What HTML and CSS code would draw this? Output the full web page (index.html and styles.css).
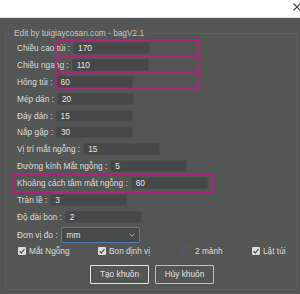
FILE: index.html
```html
<!DOCTYPE html>
<html lang="vi">
<head>
    <meta charset="UTF-8">
    <title>bagV2.1</title>
    <link rel="stylesheet" href="styles.css">
</head>
<body>
    <div class="titlebar">
        <svg class="close" viewBox="0 0 8 8"><path d="M0.5 0.5 L7.5 7.5 M7.5 0.5 L0.5 7.5"/></svg>
    </div>

    <div class="panel">
        <fieldset class="group">
            <legend>Edit by tuigiaycosan.com - bagV2.1</legend>

            <div class="row"><label>Chiều cao túi :</label><input class="field" value="170"></div>
            <div class="row"><label>Chiều ngang :</label><input class="field" value="110"></div>
            <div class="row"><label>Hông túi :</label><input class="field" value="60"></div>
            <div class="row"><label>Mép dán :</label><input class="field" value="20"></div>
            <div class="row"><label>Đáy dán :</label><input class="field" value="15"></div>
            <div class="row"><label>Nắp gập :</label><input class="field" value="30"></div>
            <div class="row"><label>Vị trí mắt ngỗng :</label><input class="field" value="15"></div>
            <div class="row"><label>Đường kính Mắt ngỗng :</label><input class="field" value="5"></div>
            <div class="row"><label>Khoảng cách tâm mắt ngỗng :</label><input class="field" value="60"></div>
            <div class="row"><label>Tràn lề :</label><input class="field" value="3"></div>
            <div class="row"><label>Độ dài bon :</label><input class="field" value="2"></div>

            <div class="row row-select">
                <label>Đơn vị đo :</label>
                <div class="select">
                    <span>mm</span>
                    <svg class="chevron" viewBox="0 0 6 4"><path d="M0.5 0.8 L3 3.2 L5.5 0.8"/></svg>
                </div>
            </div>

            <div class="checks">
                <div class="check"><span class="box"><svg viewBox="0 0 8 8"><path d="M1.6 4.2 L3.3 6 L6.5 2"/></svg></span>Mắt Ngỗng</div>
                <div class="check"><span class="box"><svg viewBox="0 0 8 8"><path d="M1.6 4.2 L3.3 6 L6.5 2"/></svg></span>Bon định vị</div>
                <div class="check"><span class="box box-off"></span>2 mảnh</div>
                <div class="check"><span class="box"><svg viewBox="0 0 8 8"><path d="M1.6 4.2 L3.3 6 L6.5 2"/></svg></span>Lật túi</div>
            </div>

            <div class="actions">
                <button class="btn btn-main">Tạo khuôn</button>
                <button class="btn">Hủy khuôn</button>
            </div>
        </fieldset>

        <!-- highlight frames drawn over the form -->
        <div class="mark mark-1"></div>
        <div class="mark mark-2"></div>
        <div class="mark mark-3"></div>
        <div class="mark mark-4"></div>
    </div>
</body>
</html>
```

FILE: styles.css
```css
body {
    margin: 0;
    width: 300px;
    height: 294px;
    overflow: hidden;
    background-color: #545655;
    color: #dcdddc;
    font-family: "Liberation Sans", Arial, sans-serif;
    font-size: 8.3px;
}

/* white window title strip */
.titlebar {
    height: 18px;
    box-sizing: border-box;
    background-color: #ffffff;
    border-bottom: 1px solid #e4e4e4;
    display: flex;
    justify-content: flex-end;
}
.close {
    width: 8px;
    height: 8px;
    margin: 3px -1px 0 0;
    fill: none;
    stroke: #3a3a3a;
    stroke-width: 1.1;
}

.panel {
    position: relative;
    height: 276px;
    box-sizing: border-box;
    padding: 10px 3px 0 5px;
}

/* group box with the caption on its top edge */
.group {
    margin: 0;
    min-height: 262px;
    box-sizing: border-box;
    padding: 1.5px 0 0 7px;
    border: 1px solid #5b5d5c;
}
.group legend {
    padding: 0 1px;
    line-height: 10px;
    color: #c8c9c8;
}

.row {
    display: flex;
    align-items: center;
    gap: 3px;
    height: 16.9px;
    padding-left: 4px;
    white-space: nowrap;
}
.field {
    width: 77px;
    height: 12px;
    box-sizing: border-box;
    padding: 0 4px;
    border: 1px solid #4b4d4c;
    border-radius: 2px;
    background-color: #464847;
    color: #e8e8e8;
    font: inherit;
    outline: none;
}

.row-select {
    height: 19px;
}
.select {
    width: 79px;
    height: 16px;
    box-sizing: border-box;
    display: flex;
    align-items: center;
    justify-content: space-between;
    padding: 0 4px 0 5px;
    border: 1px solid #4d7db3;
    border-radius: 2px;
    background-color: #474948;
    color: #e8e8e8;
}
.chevron {
    width: 6px;
    height: 4px;
    fill: none;
    stroke: #b8b8b8;
    stroke-width: 1;
}

/* checkbox line */
.checks {
    display: grid;
    grid-template-columns: 80px 84px 70px auto;
    align-items: center;
    height: 13px;
    padding-left: 5px;
    white-space: nowrap;
}
.check {
    display: flex;
    align-items: center;
    gap: 3px;
}
.box {
    width: 8px;
    height: 8px;
    border-radius: 1px;
    background-color: #dcdcdc;
    display: flex;
}
.box svg {
    width: 8px;
    height: 8px;
    fill: none;
    stroke: #4a4a4a;
    stroke-width: 1.2;
}
.box-off {
    background: none;
    border-top: 1px solid #4b5b79;
    border-left: 1px solid #4b5b79;
    box-sizing: border-box;
    margin-right: 2px;
}

.actions {
    display: flex;
    gap: 6px;
    margin-top: 7.5px;
    padding-left: 77px;
}
.btn {
    width: 59px;
    height: 19px;
    padding: 0;
    border: 1px solid #bdbebd;
    border-radius: 1px;
    background-color: #545655;
    color: #e4e4e4;
    font: inherit;
}
.btn-main {
    border-color: #e4e4e4;
}

/* magenta highlight frames */
.mark {
    position: absolute;
    border: 2px solid #b0237c;
    box-sizing: border-box;
}
.mark-1 { left: 55px; top: 21px; width: 145px; height: 19px; }
.mark-2 { left: 55px; top: 38px; width: 145px; height: 18px; }
.mark-3 { left: 55px; top: 54px; width: 145px; height: 18px; }
.mark-4 { left: 12px; top: 155px; width: 201px; height: 20px; }
```
